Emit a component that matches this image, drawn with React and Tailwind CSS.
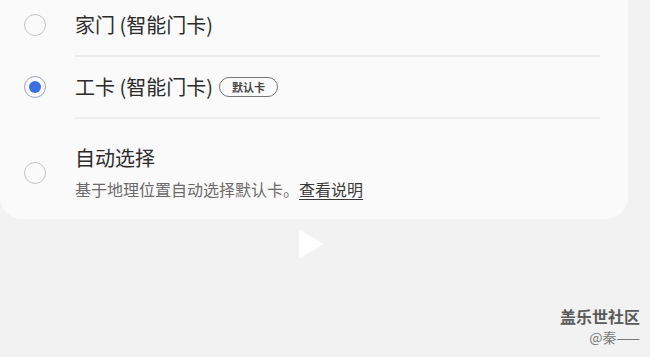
import React from "react";

const font = { fontFamily: '"Noto Sans CJK SC", "Noto Sans", sans-serif' };

function Radio({ checked }) {
  return (
    <div
      className={
        "flex h-[22px] w-[22px] shrink-0 items-center justify-center rounded-full border-[1.5px] " +
        (checked ? "border-[#9aa6bd]" : "border-[#c4c4c4]")
      }
    >
      {checked && <div className="h-[12px] w-[12px] rounded-full bg-[#3d6fe3]" />}
    </div>
  );
}

export default function App() {
  return (
    <div className="relative h-[357px] w-[650px] overflow-hidden bg-[#f2f2f2]" style={font}>
      {/* Card */}
      <div className="w-[628px] rounded-b-[22px] bg-[#fafafa] pb-[22px]">
        <div className="flex h-[55px] items-center pb-[6px] pl-[24px]">
          <Radio />
          <div className="ml-[29px] text-[20px] leading-none text-[#2b2b2b]">家门 (智能门卡)</div>
        </div>
        <div className="ml-[75px] mr-[28px] h-[2px] bg-[#ececec]" />
        <div className="flex h-[60px] items-center pl-[24px]">
          <Radio checked />
          <div className="ml-[29px] text-[20px] leading-none text-[#2b2b2b]">工卡 (智能门卡)</div>
          <div className="ml-[6px] flex h-[20px] items-center rounded-full border border-[#777] px-[12px] text-[11px] font-bold leading-none text-[#444]">
            默认卡
          </div>
        </div>
        <div className="ml-[75px] mr-[28px] h-[2px] bg-[#ececec]" />
        <div className="flex items-center pl-[24px] pt-[29px]">
          <Radio />
          <div className="ml-[29px]">
            <div className="text-[20px] leading-none text-[#2b2b2b]">自动选择</div>
            <div className="mt-[13px] text-[16px] leading-none text-[#6a6a6a]">
              基于地理位置自动选择默认卡。
              <span className="text-[#3a3a3a] underline underline-offset-[3px]">查看说明</span>
            </div>
          </div>
        </div>
      </div>

      {/* Play button */}
      <div className="mt-[11px] pl-[298px]">
        <svg width="26" height="28" viewBox="0 0 26 28">
          <path d="M2 1 L24 14 L2 27 Z" fill="#ffffff" stroke="#ffffff" strokeWidth="2" strokeLinejoin="round" />
        </svg>
      </div>

      {/* Watermark */}
      <div className="absolute right-[10px] top-[307px] flex flex-col items-end">
        <div className="text-[16px] font-bold leading-[18px] text-[#5a5a5a]">盖乐世社区</div>
        <div className="mt-[4px] text-[14px] leading-[16px] text-[#7a7a7a]">@秦——</div>
      </div>
    </div>
  );
}
